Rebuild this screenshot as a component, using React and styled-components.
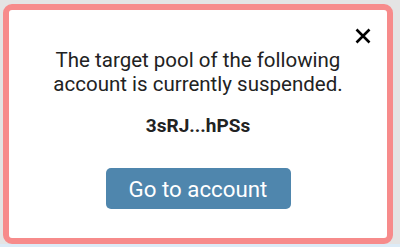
import React from 'react';
import styled, { createGlobalStyle } from 'styled-components';

const GlobalStyle = createGlobalStyle`
  html, body {
    margin: 0;
    padding: 0;
    background: #e4e4e4;
    font-family: Roboto, "Liberation Sans", sans-serif;
  }
`;

const Page = styled.div`
  width: 400px;
  height: 247px;
  box-sizing: border-box;
  padding: 4px 7px 0 3px;
  background: linear-gradient(to bottom, #e4e4e4 0, #e4e4e4 244px, #dcebf7 244px);
`;

const Modal = styled.div`
  position: relative;
  box-sizing: border-box;
  width: 390px;
  height: 240px;
  border: 6px solid #f78b8b;
  border-radius: 9px;
  background: #fff;
  display: flex;
  flex-direction: column;
  align-items: center;
  padding-top: 38px;
`;

const CloseButton = styled.button`
  position: absolute;
  top: 16px;
  right: 14px;
  width: 20px;
  height: 20px;
  padding: 0;
  border: 0;
  background: none;
  cursor: pointer;
  display: flex;
  align-items: center;
  justify-content: center;
`;

const Message = styled.p`
  margin: 0;
  font-size: 20.5px;
  line-height: 24px;
  color: #222;
  text-align: center;
`;

const Account = styled.div`
  margin-top: 20px;
  font-size: 19px;
  font-weight: 700;
  line-height: 20px;
  color: #222;
`;

const GoButton = styled.button`
  margin-top: 32px;
  width: 185px;
  height: 41px;
  padding: 0;
  border: 0;
  border-radius: 5px;
  background: #4f86ad;
  color: #fff;
  font-family: Roboto, "Liberation Sans", sans-serif;
  font-size: 22.3px;
  cursor: pointer;
`;

const CloseIcon = () => (
  <svg width="16" height="16" viewBox="0 0 16 16" fill="none">
    <path d="M1.5 1.5 14.5 14.5M14.5 1.5 1.5 14.5" stroke="#000" strokeWidth="2.6" />
  </svg>
);

const App = () => (
  <Page>
    <GlobalStyle />
    <Modal>
      <CloseButton aria-label="Close">
        <CloseIcon />
      </CloseButton>
      <Message>
        The target pool of the following
        <br />
        account is currently suspended.
      </Message>
      <Account>3sRJ...hPSs</Account>
      <GoButton>Go to account</GoButton>
    </Modal>
  </Page>
);

export default App;
